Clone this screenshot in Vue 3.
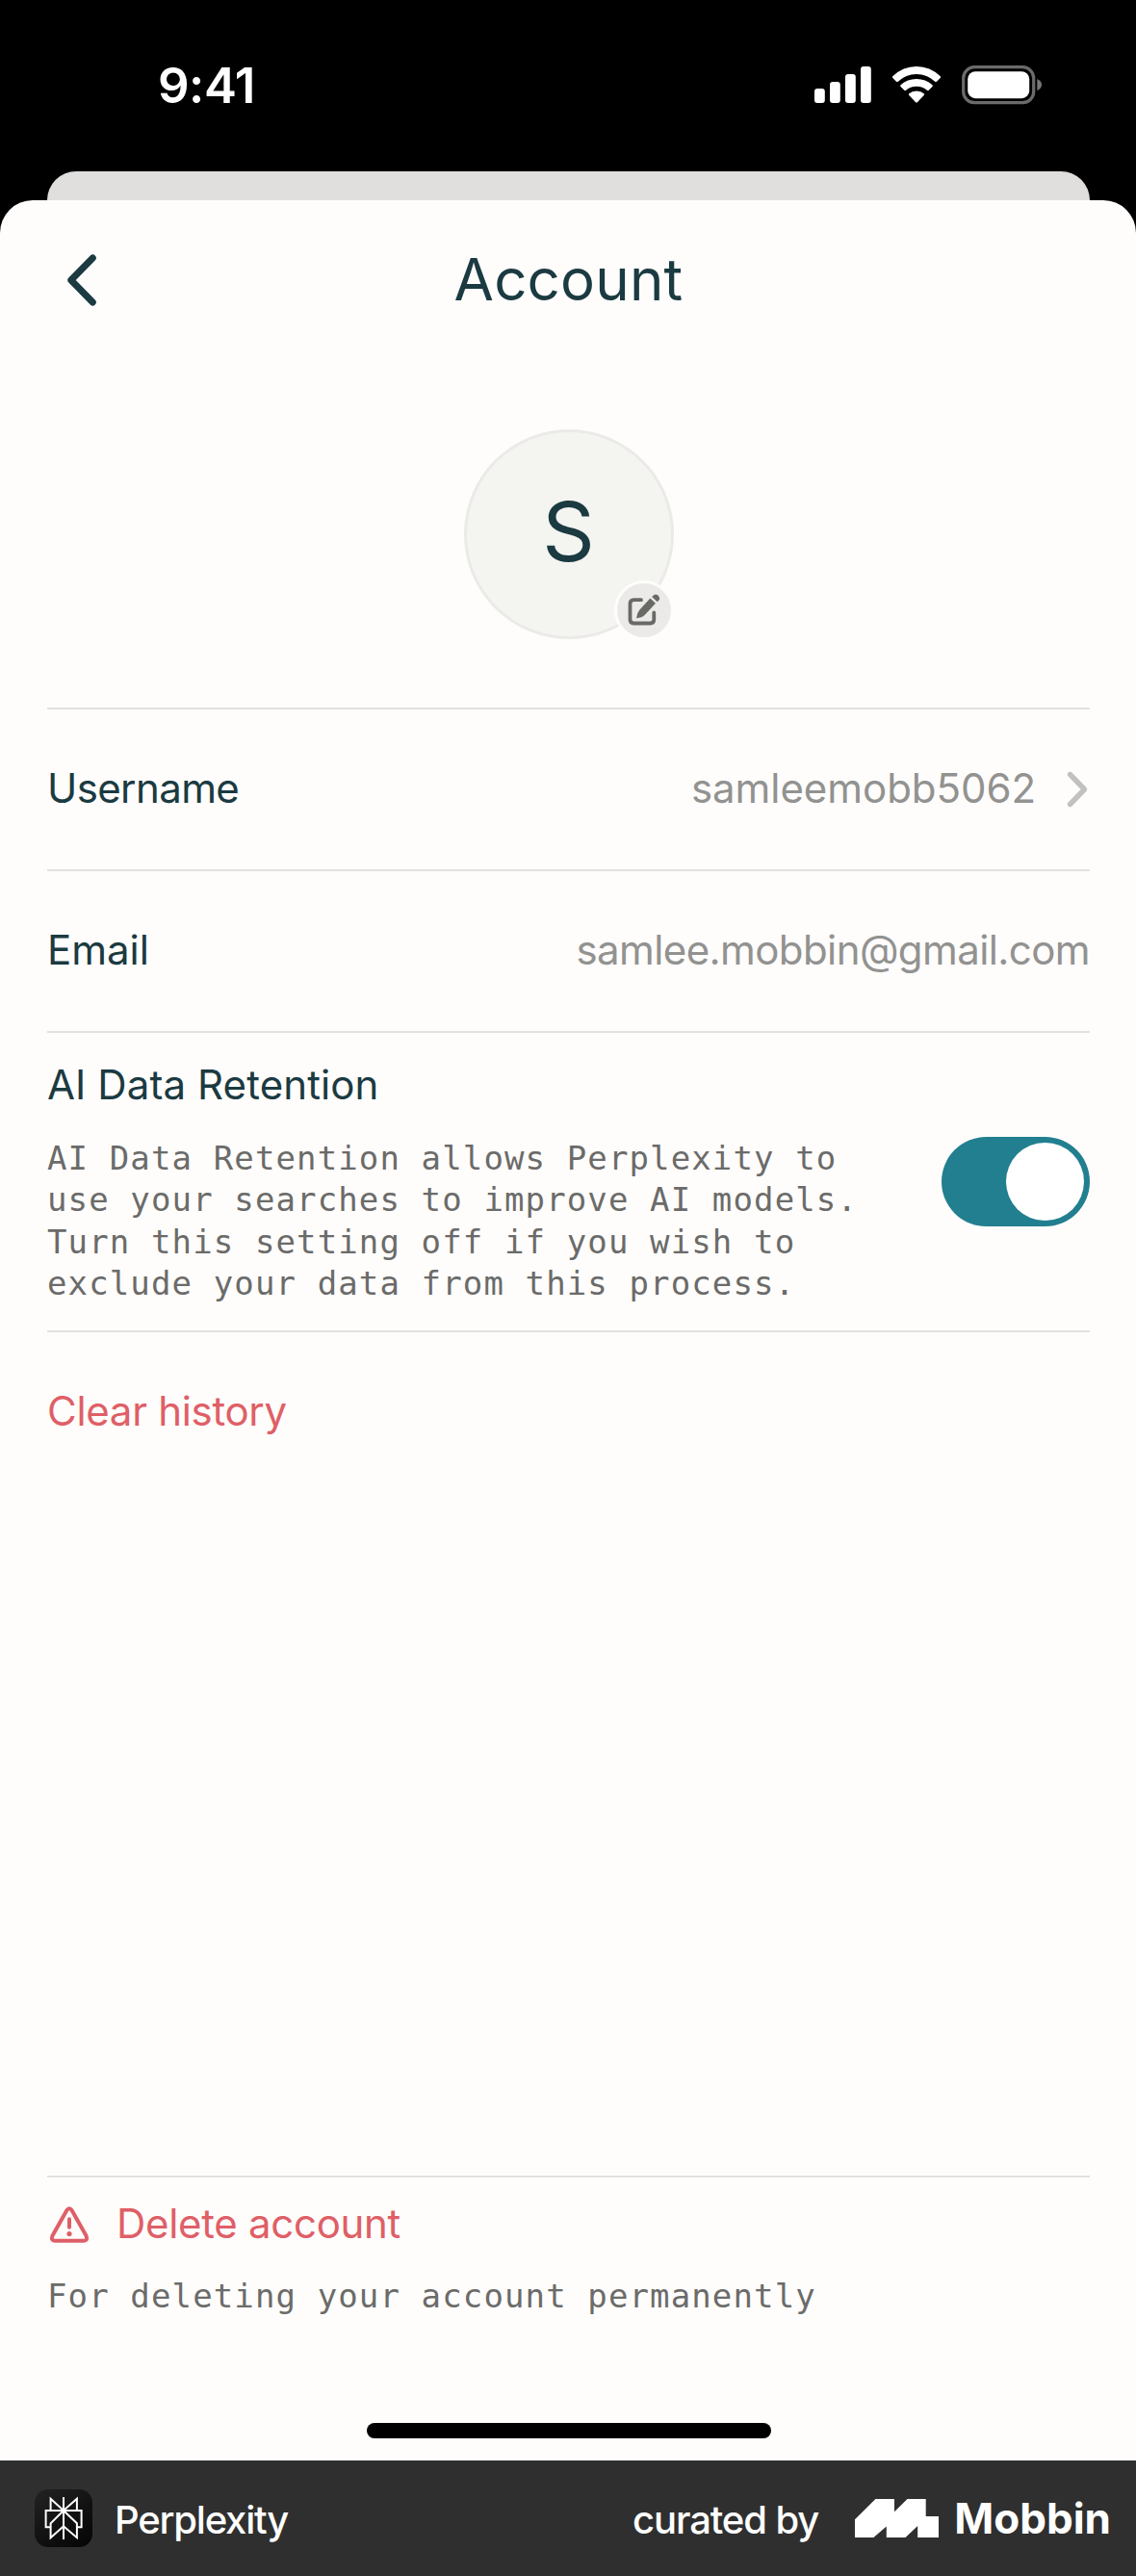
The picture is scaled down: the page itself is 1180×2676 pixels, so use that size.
<script setup>
const description = [
  'AI Data Retention allows Perplexity to',
  'use your searches to improve AI models.',
  'Turn this setting off if you wish to',
  'exclude your data from this process.',
]
</script>

<template>
  <div class="screen">
    <header class="status">
      <span class="time">9:41</span>
      <div class="indicators">
        <svg width="60" height="40" viewBox="0 0 60 40" fill="#fff">
          <rect x="0" y="24" width="10.8" height="15" rx="3" />
          <rect x="16" y="17" width="10.8" height="22" rx="3" />
          <rect x="32" y="9" width="10.8" height="30" rx="3" />
          <rect x="48" y="1" width="10.8" height="38" rx="3" />
        </svg>
        <svg class="wifi" width="52" height="40" viewBox="0 0 52 40" fill="#fff">
          <path d="M1.2 11.2Q0.4 12.2 1.3 13.1L5 16.7Q5.9 17.5 6.8 16.7Q15 9 26 9T45.2 16.7Q46.1 17.5 47 16.7L50.7 13.1Q51.6 12.2 50.8 11.2Q40 1 26 1T1.2 11.2Z" />
          <path d="M9.5 20.2Q8.8 21.1 9.5 22L13.3 25.7Q14.2 26.5 15.1 25.7Q19.5 21.8 26 21.8T36.9 25.7Q37.8 26.5 38.7 25.7L42.5 22Q43.2 21.1 42.5 20.2Q35.5 14 26 14T9.5 20.2Z" />
          <path d="M18.2 29.2Q17.5 30.2 18.3 31L24.9 38Q26 39 27.1 38L33.7 31Q34.5 30.2 33.8 29.2Q30.8 26.6 26 26.6T18.2 29.2Z" />
        </svg>
        <svg class="battery" width="84" height="40" viewBox="0 0 84 40">
          <rect x="1.7" y="1.7" width="73" height="37" rx="11.5" fill="none" stroke="#6b6b6b" stroke-width="3.2" />
          <rect x="6.2" y="6.2" width="64" height="28" rx="8" fill="#fff" />
          <path d="M78.3 14Q83 16 83 20T78.3 26Z" fill="#77777a" />
        </svg>
      </div>
    </header>
    <div class="back-sheet"></div>

    <main class="sheet">
      <div class="nav">
        <svg width="36" height="57" viewBox="0 0 36 57" fill="none" stroke="#1b3a41" stroke-width="7" stroke-linecap="round" stroke-linejoin="round">
          <path d="M30.3 6L7.8 29L30.3 52" />
        </svg>
        <h1>Account</h1>
        <span class="nav-end"></span>
      </div>

      <div class="avatar">
        <span>S</span>
        <div class="edit">
          <svg width="34" height="34" viewBox="0 0 34 34">
            <path d="M14 6.2H6.5Q2.5 6.2 2.5 10.2V26.5Q2.5 30.5 6.5 30.5H23.3Q27.3 30.5 27.3 26.5V19.5" fill="none" stroke="#696966" stroke-width="3.8" stroke-linecap="round" />
            <path d="M23.4 4.4L29 9.8L17.8 21.8Q14.5 24.9 9 25.2Q9.6 19.5 12.6 16.2Z" fill="#696966" />
            <path d="M25.2 2.9L27 1.3Q29.3 -0.4 31.5 1.6L32.3 2.4Q34 4.6 32.4 6.6L30.8 8.2Z" fill="#696966" />
          </svg>
        </div>
      </div>

      <section class="row">
        <span class="label username">Username</span>
        <span class="value user-value">samleemobb5062</span>
        <svg width="24" height="38" viewBox="0 0 24 38" fill="none" stroke="#c1c1bf" stroke-width="5.4" stroke-linecap="round" stroke-linejoin="round">
          <path d="M3.5 3.5L18.5 19L3.5 34.5" />
        </svg>
      </section>
      <section class="row">
        <span class="label email">Email</span>
        <span class="value mail-value">samlee.mobbin@gmail.com</span>
      </section>
      <section class="row retention">
        <div>
          <h2 class="label">AI Data Retention</h2>
          <p class="mono"><span v-for="line in description" :key="line">{{ line }}</span></p>
        </div>
        <div class="toggle"><i></i></div>
      </section>
      <section class="row">
        <span class="label danger">Clear history</span>
      </section>

      <section class="delete">
        <div class="delete-title">
          <svg width="44" height="40" viewBox="0 0 44 40" fill="none" stroke="#df5f67" stroke-linecap="round" stroke-linejoin="round">
            <path d="M19.3 4.2Q22 0.5 24.7 4.2L39.5 30.5Q41.5 35.5 37 35.7H7Q2.5 35.5 4.5 30.5Z" stroke-width="4" />
            <path d="M22 13.2V21.8" stroke-width="4" />
            <circle cx="22" cy="28.6" r="2.6" fill="#df5f67" stroke="none" />
          </svg>
          <span class="label danger">Delete account</span>
        </div>
        <p class="mono">For deleting your account permanently</p>
      </section>
      <div class="home"></div>
    </main>

    <footer>
      <div class="app-icon">
        <svg width="60" height="60" viewBox="0 0 60 60" fill="none" stroke="#fff" stroke-width="2">
          <path d="M30 8V52M16.6 22V9.8L30 22L43.9 9.8V22M16.6 39.2H11.6V22H48.6V39.2H43.9M30 22L16.6 35.3V50.2L30 38.3L43.9 50.2V35.3L30 22" />
        </svg>
      </div>
      <span class="app-name">Perplexity</span>
      <span class="curated">curated by</span>
      <svg class="logo" width="87" height="40" viewBox="0 0 87 40" fill="#fff">
        <path d="M0 21.3L21.4 0H41V13.3L54.5 0H73.7V18H87V40H65.2V28L52.5 40H32.8V28.4L19.4 40H0Z" />
      </svg>
      <span class="mobbin">Mobbin</span>
    </footer>
  </div>
</template>

<style>
body { background: #000; }
</style>

<style scoped>
* { box-sizing: border-box; margin: 0; }
svg { display: block; flex: none; overflow: visible; }
.screen {
  width: 1180px;
  height: 2676px;
  display: flex;
  flex-direction: column;
  overflow: hidden;
  background: #000;
  color: #1b3a41;
  font-family: Inter, "Liberation Sans", sans-serif;
}
.status {
  height: 178px;
  padding: 68px 97px 0 164px;
  display: flex;
  justify-content: space-between;
  align-items: flex-start;
  color: #fff;
}
.time { font-size: 51px; line-height: 41px; font-weight: 600; letter-spacing: -0.5px; }
.indicators { display: flex; }
.wifi { margin-left: 20px; }
.battery { margin-left: 21px; }
.back-sheet { height: 30px; margin: 0 48px 0 49px; background: #e0dfde; border-radius: 30px 30px 0 0; flex: none; }
.sheet {
  height: 2348px;
  flex: none;
  padding: 0 48px 0 49px;
  display: flex;
  flex-direction: column;
  background: #fefdfc;
  border-radius: 34px 34px 0 0;
}
.nav { height: 164px; padding: 0 17px; display: flex; align-items: center; justify-content: space-between; }
h1 { font-size: 60px; line-height: 72px; font-weight: 400; letter-spacing: 0.2px; }
.nav-end { width: 36px; }
.avatar {
  position: relative;
  width: 218px;
  height: 218px;
  margin: 74px auto 71px;
  display: flex;
  align-items: center;
  justify-content: center;
  border: 3px solid #ebeae8;
  border-radius: 50%;
  background: #f4f4f1;
  font-size: 85px;
  flex: none;
}
.avatar span { line-height: 90px; padding-bottom: 5px; }
.edit {
  position: absolute;
  right: -3px;
  bottom: -4px;
  width: 62px;
  height: 62px;
  border: 3px solid #fefdfc;
  border-radius: 50%;
  background: #ebeae8;
  display: flex;
  align-items: center;
  justify-content: center;
}
.row { height: 168px; flex: none; border-top: 2px solid #e2e1df; display: flex; align-items: center; }
.label { font-size: 42px; line-height: 50px; font-weight: 400; letter-spacing: -0.3px; padding-bottom: 3px; white-space: nowrap; }
.username { letter-spacing: -0.6px; }
.email { letter-spacing: 0; }
.value { font-size: 42px; line-height: 50px; padding-bottom: 3px; margin-left: auto; color: #929290; white-space: nowrap; }
.user-value { margin-right: 32px; letter-spacing: -0.05px; }
.mail-value { letter-spacing: -0.6px; }
.retention { height: 311px; border-bottom: 0; align-items: flex-start; justify-content: space-between; }
.retention h2 { margin-top: 29px; letter-spacing: 0.1px; }
.mono {
  margin-top: 27px;
  font: 34px/43.3px "DejaVu Sans Mono", monospace;
  letter-spacing: 1.12px;
  color: #6b6b69;
  white-space: nowrap;
}
.mono span { display: block; }
.toggle { width: 154px; height: 93px; margin-top: 108px; padding: 6px; border-radius: 47px; background: #217f8f; display: flex; justify-content: flex-end; }
.toggle i { width: 81px; height: 81px; border-radius: 50%; background: #fff; }
.danger { color: #df5f67; }
.delete { margin-top: auto; height: 257px; flex: none; border-top: 2px solid #e2e1df; padding-top: 23px; }
.delete-title { display: flex; align-items: center; gap: 27px; padding-left: 1px; }
.delete .mono { margin-top: 26px; }
.home { width: 420px; height: 16px; margin: 0 auto 23px; border-radius: 8px; background: #000; flex: none; }
footer { height: 120px; flex: none; background: #2f2f2f; display: flex; align-items: center; padding: 0 26px 0 36px; color: #fff; font-size: 40px; font-weight: 500; line-height: 48px; }
.app-icon { width: 60px; height: 60px; border-radius: 14px; background: linear-gradient(145deg, #222, #040404); }
.app-name { margin-left: 23px; padding-top: 3px; letter-spacing: -1.2px; }
.curated { margin-left: auto; padding-top: 3px; letter-spacing: -1.1px; }
.logo { margin-left: 38px; }
.mobbin { margin-left: 16px; font-size: 44px; font-weight: 700; }
</style>
